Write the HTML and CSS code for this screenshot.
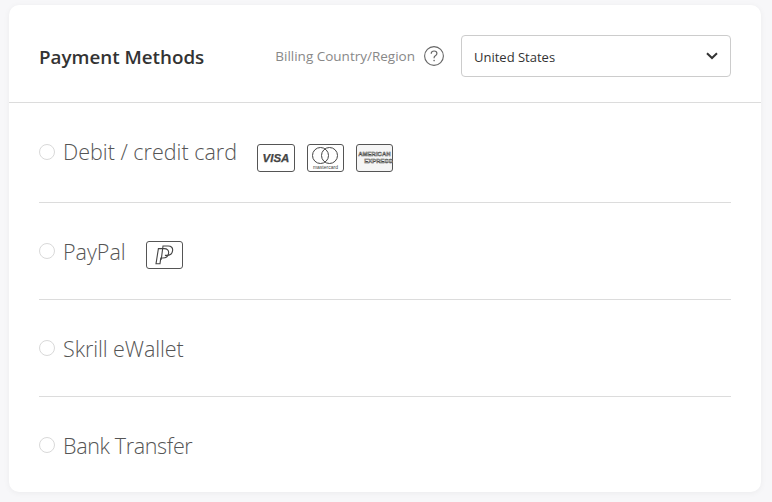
FILE: index.html
```html
<!DOCTYPE html>
<html lang="en">
<head>
<meta charset="utf-8">
<title>Payment Methods</title>
<link rel="stylesheet" href="styles.css">
</head>
<body>
<main class="card">
  <header class="head">
    <h1 class="title">Payment Methods</h1>
    <div class="region">
      <span class="region-label">Billing Country/Region</span>
      <svg class="help" width="20" height="20" viewBox="0 0 20 20" aria-hidden="true">
        <circle cx="10" cy="10" r="9.4" fill="none" stroke="#666" stroke-width="1.1"/>
        <path d="M7.2 7.8c0-1.700 1.200-2.800 2.900-2.800 1.600 0 2.800 1 2.800 2.400 0 1.200-.7 1.800-1.600 2.400-.8.5-1.200 1-1.200 1.900v.5" fill="none" stroke="#666" stroke-width="1.200"/>
        <circle cx="10.100" cy="14.600" r=".8" fill="#666"/>
      </svg>
      <div class="select">
        <span>United States</span>
        <svg class="chev" width="12" height="8" viewBox="0 0 12 8" aria-hidden="true"><path d="M1 1.200l5 4.800 5-4.800" fill="none" stroke="#333" stroke-width="2"/></svg>
      </div>
    </div>
  </header>
  <ul class="methods">
    <li class="method first">
      <span class="radio"></span><span class="name">Debit / credit card</span>
      <span class="logos">
        <span class="logo visa">VISA</span>
        <span class="logo mc">
          <svg width="30" height="17" viewBox="0 0 30 17" aria-hidden="true"><circle cx="10.500" cy="8.500" r="8" fill="none" stroke="#444"/><circle cx="19.500" cy="8.500" r="8" fill="none" stroke="#444"/></svg>
          <span class="mc-text">mastercard</span>
        </span>
        <span class="logo amex"><span>AMERICAN</span><span class="amex-2">EXPRESS</span></span>
      </span>
    </li>
    <li class="method paypal">
      <span class="radio"></span><span class="name">PayPal</span>
      <span class="logos">
        <span class="logo pp">
          <svg width="20" height="20" viewBox="0 0 20 20" aria-hidden="true">
            <path d="M7.200 14.800L9 1h5.200c3 0 4.800 1.800 4.400 4.600-.4 3-2.700 4.800-5.700 4.800h-2" fill="none" stroke="#444" stroke-width="1.100"/>
            <path d="M2 18.800L4.400 3.600h5.800c3 0 4.800 1.800 4.400 4.600-.4 3-2.700 4.800-5.700 4.800H6.800l-.8 5.800z" fill="none" stroke="#444" stroke-width="1.100"/>
          </svg>
        </span>
      </span>
    </li>
    <li class="method"><span class="radio"></span><span class="name skrill">Skrill eWallet</span></li>
    <li class="method"><span class="radio"></span><span class="name bank">Bank Transfer</span></li>
  </ul>
</main>
</body>
</html>
```
FILE: styles.css
```css
* { box-sizing: border-box; }
html, body { height: 100%; }
body {
  margin: 0;
  padding: 5px 11px 10px 9px;
  background: #f7f7f9;
  font-family: "Open Sans", "Noto Sans", sans-serif;
  color: #333;
  overflow: hidden;
}
.card {
  background: #fff;
  border-radius: 10px;
  height: 487px;
  box-shadow: 0 1px 6px rgba(0, 0, 0, .05);
}
.head {
  height: 98px;
  padding: 5px 30px 0;
  display: flex;
  align-items: center;
  justify-content: space-between;
  border-bottom: 1px solid #dcdcdc;
}
.title {
  margin: 2px 0 0;
  font-size: 18.800px;
  font-weight: 600;
  color: #333;
  line-height: 26px;
}
.region { display: flex; align-items: center; }
.region-label { font-size: 13.500px; color: #888; margin-right: 9px; }
.help { margin-right: 17px; display: block; }
.select {
  width: 270px;
  height: 42px;
  border: 1px solid #ccc;
  border-radius: 4px;
  padding: 0 12px;
  display: flex;
  align-items: center;
  justify-content: space-between;
  font-size: 13px;
  color: #333;
}
.select span { position: relative; top: 1px; }
.methods { list-style: none; margin: 0 30px; padding: 0; }
.method {
  height: 97px;
  display: flex;
  align-items: center;
  border-bottom: 1px solid #dcdcdc;
}
.method.first { height: 100px; padding-bottom: 2px; }
.method:last-child { border-bottom-color: transparent; }
.radio {
  width: 16px;
  height: 16px;
  border: 1px solid #d9d9d9;
  border-radius: 50%;
  margin-right: 8px;
  flex: none;
}
.name {
  font-size: 21.500px;
  font-weight: 300;
  color: #555;
  line-height: 28px;
  margin-top: 2px;
}
.first .name { margin-top: 0; }
.skrill { letter-spacing: -.08px; }
.bank { letter-spacing: -.35px; }
.logos { display: flex; gap: 12px; margin-left: 20px; margin-top: 13px; }
.paypal .logos { margin-top: 7px; }
.logo {
  display: flex;
  align-items: center;
  justify-content: center;
  height: 28px;
  border: 1px solid #555;
  border-radius: 3px;
  color: #444;
}
.visa { width: 38px; font: italic 700 11.500px "Liberation Sans", sans-serif; -webkit-text-stroke: .25px #444; }
.mc { width: 37px; flex-direction: column; }
.mc svg { display: block; }
.mc-text { font: 5px/6px "Liberation Sans", sans-serif; }
.amex {
  width: 37px;
  flex-direction: column;
  font: 700 6px/7px "Liberation Sans", sans-serif;
  color: #fff;
  -webkit-text-stroke: .45px #444;
  background: #f5f5f5;
}
.amex-2 { margin-left: 8px; }
.pp { width: 37px; }
```
